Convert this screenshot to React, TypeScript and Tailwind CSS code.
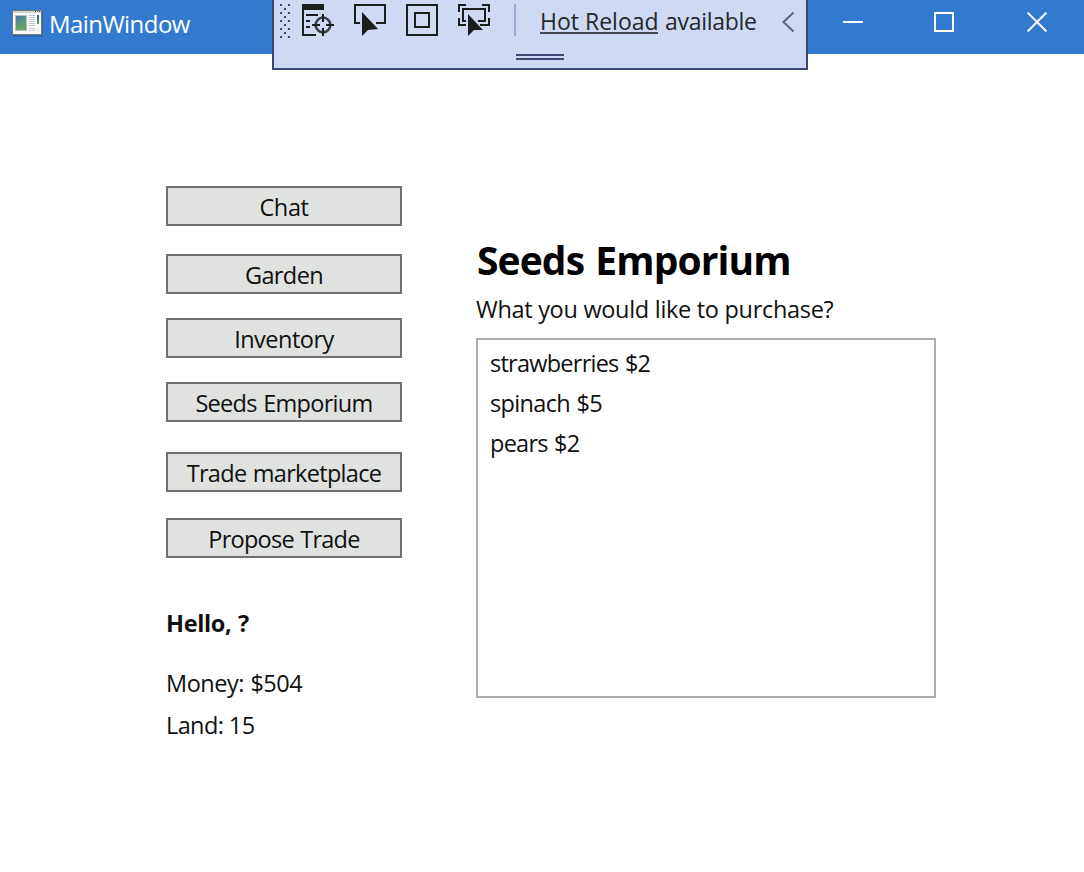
import React from 'react';

const navItems = [
  { label: 'Chat', gap: 'mt-0', tracking: 'tracking-[-0.4px]' },
  { label: 'Garden', gap: 'mt-7', tracking: 'tracking-[-0.6px]' },
  { label: 'Inventory', gap: 'mt-6', tracking: 'tracking-[-0.5px]' },
  { label: 'Seeds Emporium', gap: 'mt-6', tracking: 'tracking-[-0.7px] [word-spacing:1px]' },
  { label: 'Trade marketplace', gap: 'mt-[30px]', tracking: 'tracking-[-0.7px] [word-spacing:1px]' },
  { label: 'Propose Trade', gap: 'mt-[26px]', tracking: 'tracking-[-0.75px] [word-spacing:1px]' },
];

const seeds = [
  { label: 'strawberries $2', tracking: 'tracking-[-0.75px] [word-spacing:1px]' },
  { label: 'spinach $5', tracking: 'tracking-[-0.65px] [word-spacing:1px]' },
  { label: 'pears $2', tracking: 'tracking-[-0.75px] [word-spacing:1px]' },
];

function AppIcon() {
  return (
    <svg width="32" height="28" viewBox="0 0 32 28" className="shrink-0" shapeRendering="crispEdges">
      <defs>
        <linearGradient id="photo" x1="0" y1="0" x2="0.4" y2="1">
          <stop offset="0" stopColor="#4879a8" />
          <stop offset="0.5" stopColor="#57967f" />
          <stop offset="1" stopColor="#63a763" />
        </linearGradient>
        <linearGradient id="strip" x1="0" y1="0" x2="0" y2="1">
          <stop offset="0" stopColor="#27609a" />
          <stop offset="1" stopColor="#55a55c" />
        </linearGradient>
      </defs>
      <rect x="1" y="1" width="30" height="26" rx="1" fill="#2c68ac" />
      <rect x="0" y="0" width="30" height="25" rx="1" fill="#777773" />
      <rect x="1" y="1" width="28" height="23" fill="#fbfbfa" />
      <rect x="1" y="1" width="28" height="2" fill="#d3d4d6" />
      <path d="M23 1h1v1h-1zM25 1h1v1h-1zM27 1h1v1h-1z" fill="#555" />
      <rect x="3" y="5" width="12" height="16" fill="#b9bbcb" />
      <rect x="4" y="6" width="10" height="14" fill="url(#photo)" />
      <path d="M17 5h6v1h-6zM17 7h6v1h-6zM17 9h6v1h-6zM17 11h6v1h-6zM17 13h6v1h-6zM17 15h6v1h-6zM17 18h6v1h-6zM17 20h6v1h-6z" fill="#c4c4c4" />
      <rect x="25" y="5" width="2" height="9" fill="url(#strip)" />
      <rect x="24" y="18" width="4" height="4" fill="#eeeeee" />
    </svg>
  );
}

function Grip() {
  const dots: [number, number][] = [];
  for (let row = 0; row < 9; row++) {
    if (row % 2 === 0) dots.push([0, row * 4], [8, row * 4]);
    else dots.push([4, row * 4]);
  }
  return (
    <svg width="10" height="34" viewBox="0 0 10 34" className="mr-3 shrink-0">
      {dots.map(([x, y]) => (
        <rect key={`${x}-${y}`} x={x} y={y} width="2" height="2" fill="#3d4974" />
      ))}
    </svg>
  );
}

function LiveTreeIcon() {
  return (
    <svg width="32" height="32" viewBox="0 0 32 32" className="mr-5 shrink-0" fill="#1c1e1d">
      <path d="M0 0H22V6H2V30H14V32H0ZM4 10H16V12H4ZM4 16H8V18H4ZM4 22H8V24H4Z" />
      <circle cx="21" cy="21" r="7.4" fill="none" stroke="#3b3e42" strokeWidth="2.5" />
      <path d="M20 10h2v8h-2zM20 24h2v8h-2zM10 20h8v2h-8zM24 20h8v2h-8z" />
    </svg>
  );
}

function SelectElementIcon() {
  return (
    <svg width="32" height="32" viewBox="0 0 32 32" className="mr-5 shrink-0" fill="#1c1e1d">
      <path d="M0 0H32V20H22V18H30V2H2V18H6V20H0Z" />
      <path d="M8 8L24 25L14 26L8 32Z" />
    </svg>
  );
}

function LayoutAdornerIcon() {
  return (
    <svg width="32" height="32" viewBox="0 0 32 32" className="mr-5 shrink-0" fill="none" stroke="#1c1e1d" strokeWidth="2">
      <rect x="1" y="1" width="30" height="30" />
      <rect x="9" y="9" width="14" height="14" />
    </svg>
  );
}

function TrackFocusIcon() {
  return (
    <svg width="32" height="32" viewBox="0 0 32 32" className="shrink-0" fill="#1c1e1d">
      <path d="M0 0H8V2H2V8H0ZM24 0H32V8H30V2H24ZM0 14H2V20H8V22H0ZM30 14H32V22H22V20H30Z" />
      <path d="M4 4H28V18H20V16H26V6H6V16H8V18H4Z" />
      <path d="M10 10L25 26L16 26L10 32Z" />
    </svg>
  );
}

function DebugToolbar() {
  return (
    <div className="absolute top-0 left-[272px] flex h-[70px] w-[536px] flex-col border-x-2 border-b-2 border-[#3d4974] bg-[#cfd9f4]">
      <div className="flex h-10 items-start pt-1 pl-1.5">
        <Grip />
        <LiveTreeIcon />
        <SelectElementIcon />
        <LayoutAdornerIcon />
        <TrackFocusIcon />
        <div className="ml-6 h-8 w-0.5 shrink-0 bg-[#9aabd3]" />
        <div className="ml-6 flex h-8 w-[226px] shrink-0 items-start whitespace-nowrap text-[23px] leading-[32px] text-[#25272c]">
          <span className="mt-px h-[29px] w-[118px] border-b-2 border-[#44474f] tracking-[0px]">Hot Reload</span>
          <span className="ml-[7px] mt-px tracking-[-0.3px]">available</span>
        </div>
        <svg width="14" height="22" viewBox="0 0 14 22" className="ml-[15px] mt-[7px] shrink-0">
          <path d="M12.5 1.5L2.5 11L12.5 20.5" fill="none" stroke="#59648b" strokeWidth="2" />
        </svg>
      </div>
      <div className="mt-3.5 ml-[242px] h-1.5 w-12 border-y-2 border-[#3d4974]" />
    </div>
  );
}

export default function App() {
  return (
    <div className="relative flex h-[872px] w-[1084px] flex-col overflow-hidden bg-white font-['Open_Sans','Noto_Sans',sans-serif] text-[23.5px] leading-8 text-[#101010]">
      <header className="flex h-[54px] shrink-0 items-start bg-[#327ad0] pt-2.5 pl-3 text-white">
        <AppIcon />
        <h1 className="ml-[5px] -mt-0.5 text-[24px] leading-8 font-normal tracking-[-0.55px]">MainWindow</h1>
        <svg width="204" height="20" viewBox="0 0 204 20" className="mt-0.5 mr-[37px] ml-auto shrink-0" fill="none" stroke="#fff" strokeWidth="2">
          <path d="M0 10H20" />
          <rect x="92" y="1" width="18" height="18" />
          <path d="M184.6 0.6L203.4 19.4M203.4 0.6L184.6 19.4" />
        </svg>
      </header>
      <DebugToolbar />
      <main className="flex pl-[166px]">
        <aside className="flex w-[236px] flex-col pt-[132px]">
          <nav className="flex flex-col">
            {navItems.map((item) => (
              <button
                key={item.label}
                className={`${item.gap} ${item.tracking} flex h-10 items-center justify-center border-2 border-[#707070] bg-[#dfe2df] pt-0.5 whitespace-nowrap`}
              >
                {item.label}
              </button>
            ))}
          </nav>
          <p className="mt-[49px] font-bold tracking-[-0.35px] [word-spacing:1px]">Hello, ?</p>
          <p className="mt-7 tracking-[-0.5px] [word-spacing:1px]">Money: $504</p>
          <p className="mt-2.5 tracking-[-0.6px]">Land: 15</p>
        </aside>
        <section className="ml-[74px] flex w-[460px] flex-col pt-[182px]">
          <h2 className="pl-px text-[39px] leading-[48px] font-bold tracking-[-0.9px] [word-spacing:2px] whitespace-nowrap text-black">Seeds Emporium</h2>
          <p className="mt-[9px] tracking-[-0.3px] whitespace-nowrap">What you would like to purchase?</p>
          <ul className="mt-[13px] flex h-[360px] flex-col border-2 border-[#abadb3] px-3 pt-[3px]">
            {seeds.map((seed) => (
              <li key={seed.label} className={`${seed.tracking} h-10 leading-10`}>
                {seed.label}
              </li>
            ))}
          </ul>
        </section>
      </main>
    </div>
  );
}
